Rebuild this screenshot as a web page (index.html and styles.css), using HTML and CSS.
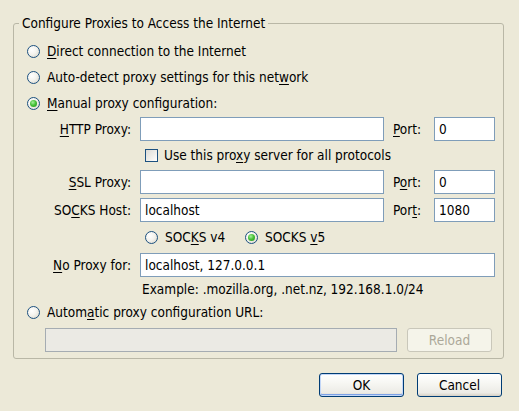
FILE: index.html
```html
<!DOCTYPE html>
<html>
<head>
<meta charset="utf-8">
<title>Connection Settings</title>
<link rel="stylesheet" href="styles.css">
</head>
<body>
<div class="dialog">
  <fieldset class="group">
    <legend class="group-title">Configure Proxies to Access the Internet</legend>
    <div class="opt"><span class="radio"></span><span><u>D</u>irect connection to the Internet</span></div>
    <div class="opt"><span class="radio"></span><span>Auto-detect proxy settings for this net<u>w</u>ork</span></div>
    <div class="opt"><span class="radio on"></span><span><u>M</u>anual proxy configuration:</span></div>

    <div class="manual">
      <span class="lbl"><u>H</u>TTP Proxy:</span>
      <span class="field"></span>
      <span class="plbl"><u>P</u>ort:</span>
      <span class="field">0</span>

      <div class="wide check-row"><span class="check"></span><span>Use this pro<u>x</u>y server for all protocols</span></div>

      <span class="lbl"><u>S</u>SL Proxy:</span>
      <span class="field"></span>
      <span class="plbl">P<u>o</u>rt:</span>
      <span class="field">0</span>

      <span class="lbl">SO<u>C</u>KS Host:</span>
      <span class="field">localhost</span>
      <span class="plbl">Por<u>t</u>:</span>
      <span class="field">1080</span>

      <div class="wide socks-row">
        <span class="socks-opt"><span class="radio"></span><span>SOC<u>K</u>S v4</span></span>
        <span class="socks-opt"><span class="radio on"></span><span>SOCKS <u>v</u>5</span></span>
      </div>

      <span class="lbl"><u>N</u>o Proxy for:</span>
      <span class="field full">localhost, 127.0.0.1</span>

      <div class="wide example">Example: .mozilla.org, .net.nz, 192.168.1.0/24</div>
    </div>

    <div class="opt auto"><span class="radio"></span><span>Autom<u>a</u>tic proxy configuration URL:</span></div>
    <div class="url-row">
      <span class="field disabled"></span>
      <span class="btn btn-disabled">Reload</span>
    </div>
  </fieldset>

  <div class="buttons">
    <span class="btn btn-default">OK</span>
    <span class="btn">Cancel</span>
  </div>
</div>
</body>
</html>
```

FILE: styles.css
```css
html, body {
  margin: 0;
  padding: 0;
  background: #ECE9D8;
}

body {
  width: 519px;
  height: 411px;
  overflow: hidden;
  font-family: "DejaVu Sans Condensed", "DejaVu Sans", sans-serif;
  font-stretch: condensed;
  font-size: 13.5px;
  line-height: 15px;
  color: #000;
}

u {
  text-decoration: underline;
  text-underline-offset: 2px;
}

.dialog {
  display: flex;
  flex-direction: column;
}

.group {
  margin: 16px 15px 0 13px;
  padding: 0 0 6px 0;
  border: 1px solid #B9B7A6;
  border-radius: 3px;
  min-width: 0;
}

.group-title {
  margin-left: 5px;
  padding: 0 3px;
}

.opt {
  display: flex;
  align-items: center;
  gap: 7px;
  height: 20px;
  padding-left: 13px;
  margin-top: 6px;
}

.opt:first-of-type {
  margin-top: 10px;
}

.radio {
  width: 13px;
  height: 13px;
  box-sizing: border-box;
  border: 1px solid #1C5180;
  border-radius: 50%;
  background: radial-gradient(circle at 35% 35%, #FFFFFF 0%, #F4F3EE 45%, #D6D3C6 100%);
  flex: none;
  display: flex;
  align-items: center;
  justify-content: center;
}

.radio.on::after {
  content: "";
  width: 7px;
  height: 7px;
  border-radius: 50%;
  background: radial-gradient(circle at 40% 35%, #A7EF9E 0%, #49C23A 45%, #1C8F16 100%);
}

.check {
  width: 13px;
  height: 13px;
  box-sizing: border-box;
  border: 1px solid #1C5180;
  background: linear-gradient(135deg, #DCDCD7 0%, #F1F0EC 60%, #FFFFFF 100%);
  flex: none;
}

.manual {
  display: grid;
  grid-template-columns: 117px 244px 32px 61px;
  column-gap: 9px;
  row-gap: 4px;
  margin-top: 4px;
  align-items: center;
}

.lbl {
  text-align: right;
  white-space: nowrap;
}

.plbl {
  white-space: nowrap;
}

.field {
  height: 24px;
  box-sizing: border-box;
  border: 1px solid #7F9DB9;
  background: #FFFFFF;
  padding: 0 4px;
  display: flex;
  align-items: center;
  white-space: nowrap;
}

.field.full {
  grid-column: 2 / 5;
}

.wide {
  grid-column: 2 / 5;
}

.check-row {
  display: flex;
  align-items: center;
  gap: 6px;
  height: 21px;
  padding-left: 5px;
}

.socks-row {
  display: flex;
  align-items: center;
  height: 23px;
  padding-left: 5px;
}

.socks-opt {
  display: flex;
  align-items: center;
  gap: 7px;
  width: 100px;
}

.example {
  height: 16px;
  padding-left: 2px;
  display: flex;
  align-items: center;
}

.opt.auto {
  margin-top: 5px;
}

.url-row {
  display: flex;
  align-items: center;
  gap: 10px;
  margin: 6px 0 0 31px;
}

.field.disabled {
  width: 352px;
  background: #EBEAE4;
  border-color: #A5ACB2;
}

.btn {
  width: 85px;
  height: 24px;
  box-sizing: border-box;
  border: 1px solid #003C74;
  border-radius: 3px;
  background: linear-gradient(#FFFFFF 0%, #F7F7F3 40%, #ECEBE6 85%, #D6D0C5 100%);
  display: flex;
  align-items: center;
  justify-content: center;
}

.btn-disabled {
  border-color: #C9C7BA;
  background: #F5F4EA;
  color: #ACA899;
}

.btn-default {
  box-shadow: inset 0 0 0 1px #C2D6F7, inset 0 -1px 0 1px #7CA1E6;
}

.buttons {
  display: flex;
  justify-content: flex-end;
  gap: 13px;
  margin: 14px 17px 0 0;
}
```
